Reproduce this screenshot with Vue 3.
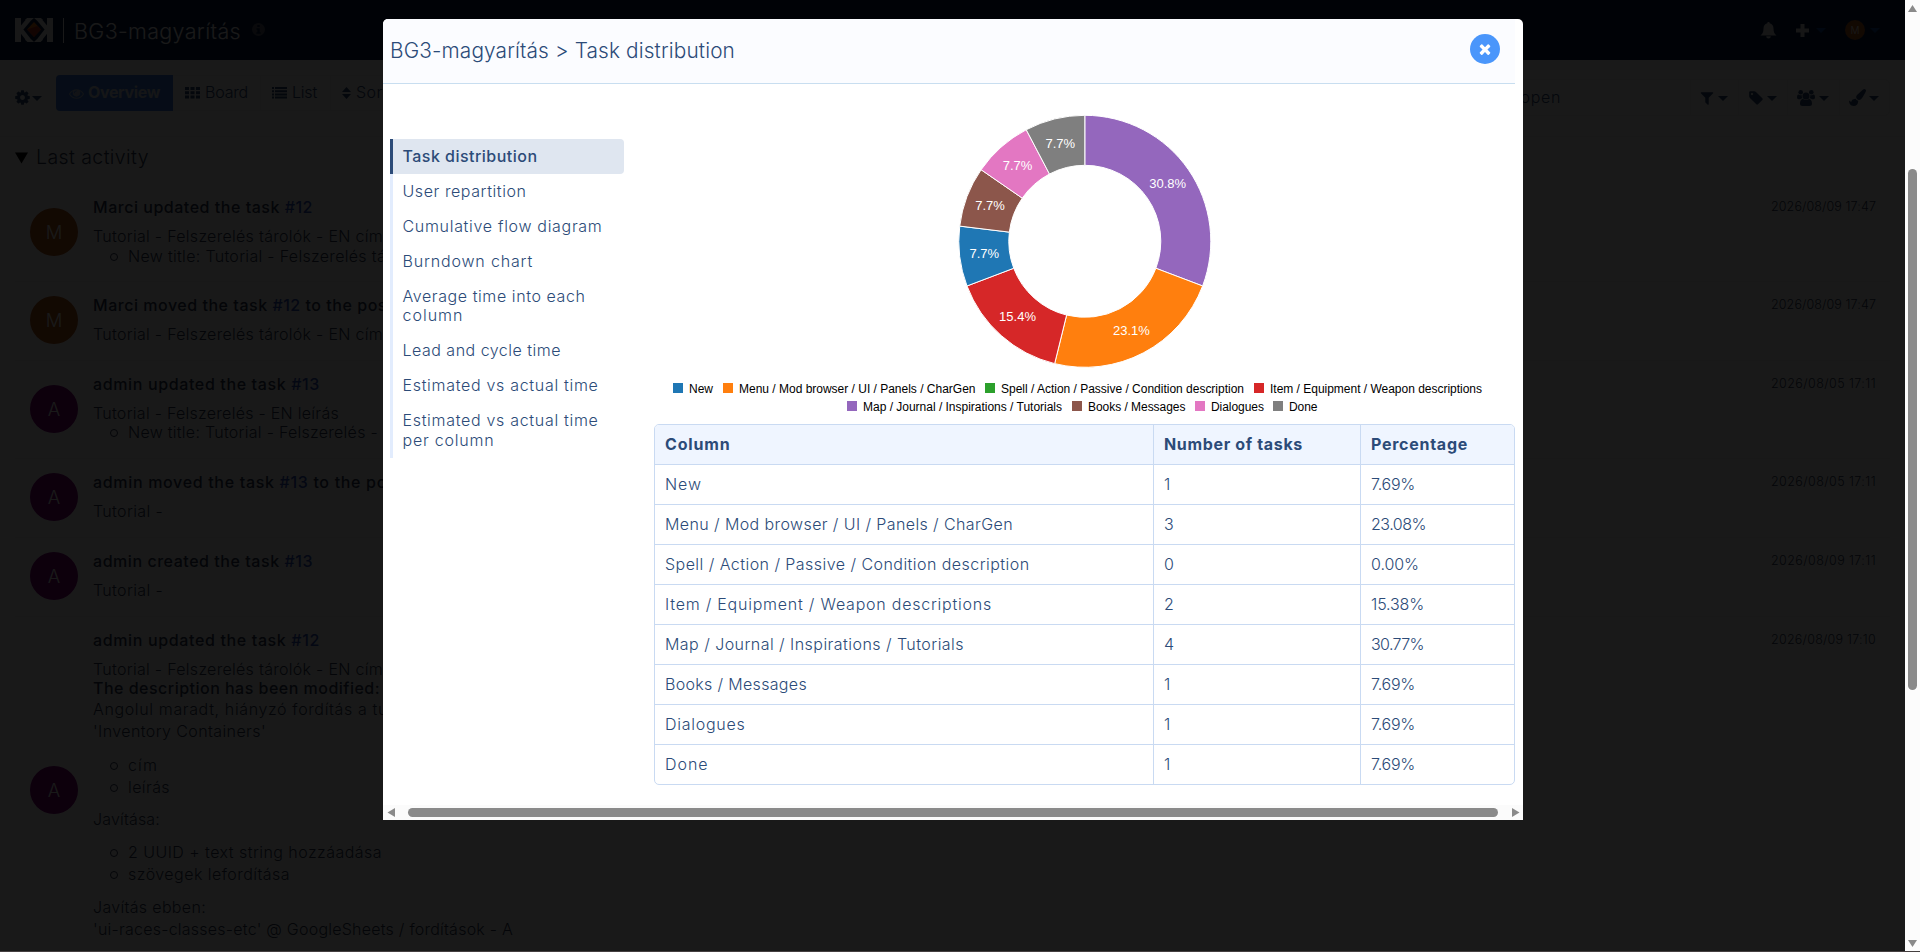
<script setup>
const setSpacing = (el, binding) => {
  el.style.letterSpacing = '0px'
  const natural = el.getBoundingClientRect().width
  const count = el.textContent.trim().length
  el.style.letterSpacing = ((binding.value - natural) / count).toFixed(3) + 'px'
}
// Tracks the text out so that it fills the given width
const vFit = { mounted: setSpacing }

const icons = {
  gear: 'M1152 896q0-106-75-181t-181-75-181 75-75 181 75 181 181 75 181-75 75-181zm512-109v222q0 12-8 23t-20 13l-185 28q-19 54-39 91 35 50 107 138 10 12 10 25t-9 23q-27 37-99 108t-94 71q-12 0-26-9l-138-108q-44 23-91 38-16 136-29 186-7 28-36 28h-222q-14 0-24.5-8.5t-11.5-21.5l-28-184q-49-16-90-37l-141 107q-10 9-25 9-14 0-25-11-126-114-165-168-7-10-7-23 0-12 8-23 15-21 51-66.5t54-70.5q-27-50-41-99l-183-27q-13-2-21-12.5t-8-23.5v-222q0-12 8-23t19-13l186-28q14-46 39-92-40-57-107-138-10-12-10-24 0-10 9-23 26-36 98.5-107.5t94.5-71.5q13 0 26 10l138 107q44-23 91-38 16-136 29-186 7-28 36-28h222q14 0 24.5 8.5t11.5 21.5l28 184q49 16 90 37l142-107q9-9 24-9 13 0 25 10 129 119 165 170 7 8 7 22 0 12-8 23-15 21-51 66.5t-54 70.5q26 50 41 98l183 28q13 2 21 12.5t8 23.5z',
  eye: 'M1664 960q-152-236-381-353 61 104 61 225 0 185-131.5 316.5t-316.5 131.5-316.5-131.5-131.5-316.5q0-121 61-225-229 117-381 353 133 205 333.5 326.5t434.5 121.5 434.5-121.5 333.5-326.5zm-720-384q0-20-14-34t-34-14q-125 0-214.5 89.5t-89.5 214.5q0 20 14 34t34 14 34-14 14-34q0-86 61-147t147-61q20 0 34-14t14-34zm848 384q0 34-20 69-140 230-376.5 368.5t-499.5 138.5-499.5-139-376.5-368q-20-35-20-69t20-69q140-229 376.5-368t499.5-139 499.5 139 376.5 368q20 35 20 69z',
  filter: 'M1595 295q17 41-14 70l-493 493v742q0 42-39 59-13 5-25 5-27 0-45-19l-256-256q-19-19-19-45v-486l-493-493q-31-29-14-70 17-39 59-39h1280q42 0 59 39z',
  tag: 'M576 448q0-53-37.5-90.5t-90.5-37.5-90.5 37.5-37.5 90.5 37.5 90.5 90.5 37.5 90.5-37.5 37.5-90.5zm1067 576q0 53-37 90l-491 492q-39 37-91 37-53 0-90-37l-715-716q-38-37-64.5-101t-26.5-117v-416q0-52 38-90t90-38h416q53 0 117 26.5t102 64.5l715 714q37 39 37 91z',
  brush: 'M1615 0q70 0 122.5 46.5t52.5 116.5q0 63-45 151-332 629-465 752-97 91-218 91-126 0-216.5-92.5t-90.5-219.5q0-128 92-212l638-579q59-54 130-54zm-909 1034q39 76 106.5 130t150.5 76l1 71q4 213-129.5 347t-348.5 134q-123 0-218-46.5t-152.5-127.5-86.5-183-29-220q7 5 41 30t62 44.5 59 36.5 46 17q41 0 55-37 25-66 57.5-112.5t69.5-76 88-47.5 103-25.5 125-10.5z',
  times: 'M1490 1322q0 40-28 68l-136 136q-28 28-68 28t-68-28l-294-294-294 294q-28 28-68 28t-68-28l-136-136q-28-28-28-68t28-68l294-294-294-294q-28-28-28-68t28-68l136-136q28-28 68-28t68 28l294 294 294-294q28-28 68-28t68 28l136 136q28 28 28 68t-28 68l-294 294 294 294q28 28 28 68z',
}

const events = [
  { who: 'M', text: 'Marci updated the task', id: '#12', w: 220, desc: 'Tutorial - Felszerelés tárolók - EN cím', dw: 290, li: 'New title: Tutorial - Felszerelés tá', lw: 258, date: '2026/08/09 17:47' },
  { who: 'M', text: 'Marci moved the task', id: '#12', rest: ' to the pos', w: 294, desc: 'Tutorial - Felszerelés tárolók - EN cím', dw: 290, date: '2026/08/09 17:47' },
  { who: 'A', text: 'admin updated the task', id: '#13', w: 227, desc: 'Tutorial - Felszerelés - EN leírás', dw: 246, li: 'New title: Tutorial - Felszerelés -', lw: 250, date: '2026/08/05 17:11' },
  { who: 'A', text: 'admin moved the task', id: '#13', rest: ' to the po', w: 294, desc: 'Tutorial -', dw: 70, date: '2026/08/05 17:11' },
  { who: 'A', text: 'admin created the task', id: '#13', w: 220, desc: 'Tutorial -', dw: 70, date: '2026/08/09 17:11' },
  { who: 'A', text: 'admin updated the task', id: '#12', w: 227, desc: 'Tutorial - Felszerelés tárolók - EN cím', dw: 290, long: true, date: '2026/08/09 17:10' },
]

const menu = [
  [['Task distribution', 135]],
  [['User repartition', 124]],
  [['Cumulative flow diagram', 200]],
  [['Burndown chart', 130.5]],
  [['Average time into each', 183], ['column', 61]],
  [['Lead and cycle time', 158.5]],
  [['Estimated vs actual time', 196]],
  [['Estimated vs actual time', 196], ['per column', 92]],
]

const rows = [
  ['New', 37, '1', 7, '7.69%', 44],
  ['Menu / Mod browser / UI / Panels / CharGen', 348, '3', 10, '23.08%', 55],
  ['Spell / Action / Passive / Condition description', 364.5, '0', 11, '0.00%', 48],
  ['Item / Equipment / Weapon descriptions', 327, '2', 10, '15.38%', 53],
  ['Map / Journal / Inspirations / Tutorials', 299, '4', 11, '30.77%', 53],
  ['Books / Messages', 142, '1', 7, '7.69%', 44],
  ['Dialogues', 80.5, '1', 7, '7.69%', 44],
  ['Done', 43.5, '1', 7, '7.69%', 44],
]

const cx = 430.8, cy = 141.3, R = 126, r = 76
const parts = [[4, '30.8%', '#9467bd'], [3, '23.1%', '#ff7f0e'], [2, '15.4%', '#d62728'], [1, '7.7%', '#1f77b4'], [1, '7.7%', '#8c564b'], [1, '7.7%', '#e377c2'], [1, '7.7%', '#7f7f7f']]
let sum = 0
const pt = (a, q) => `${(cx + Math.sin(a) * q).toFixed(2)} ${(cy - Math.cos(a) * q).toFixed(2)}`
const slices = parts.map(([n, label, fill]) => {
  const a = (sum / 13) * 2 * Math.PI
  sum += n
  const b = (sum / 13) * 2 * Math.PI
  const m = (a + b) / 2
  return {
    label, fill,
    d: `M${pt(a, R)}A${R} ${R} 0 0 1 ${pt(b, R)}L${pt(b, r)}A${r} ${r} 0 0 0 ${pt(a, r)}Z`,
    x: cx + Math.sin(m) * 101 - 0.3, y: cy - Math.cos(m) * 101 + 4.5,
  }
})
const legend = [
  ['New', '#1f77b4', 19, 283, 24],
  ['Menu / Mod browser / UI / Panels / CharGen', '#ff7f0e', 69, 283, 236.5],
  ['Spell / Action / Passive / Condition description', '#2ca02c', 331, 283, 243],
  ['Item / Equipment / Weapon descriptions', '#d62728', 600, 283, 212],
  ['Map / Journal / Inspirations / Tutorials', '#9467bd', 193, 301, 199],
  ['Books / Messages', '#8c564b', 418, 301, 97.5],
  ['Dialogues', '#e377c2', 541, 301, 53],
  ['Done', '#7f7f7f', 619, 301, 28.5],
]
</script>

<template>
  <div class="window">
    <div class="page">
      <header class="top">
        <svg class="logo" width="38" height="24" viewBox="0 0 38 24">
          <path d="M0 0H6V24H0zM32 0H38V24H32z" fill="#eee" />
          <path d="M16 -1L5.500 11.500L16 25M22 -1L32.500 11.500L22 25M11.500 3.500L19 -3L26.500 3.500M11.500 20L19 27L26.500 20" fill="none" stroke="#eee" stroke-width="4.500" />
          <path d="M19 4L26 11.500L19 19L12 11.500Z" fill="#e8720f" />
          <path d="M12 11.500L19 19L26 11.500L22.500 8Z" fill="#a8101a" opacity=".7" />
        </svg>
        <i class="bar"></i>
        <span class="ptitle"><span v-fit="167">BG3-magyarítás</span></span>
        <svg class="info" width="13" height="13" viewBox="0 0 13 13"><circle cx="6.500" cy="6.500" r="6.500" fill="#5a6270" /><path d="M5.300 2h2.400v2H5.300zM4.500 5.200h3.200V9.200h1V10.800H4.400V9.200h1V6.700h-.9z" fill="#001b44" /></svg>
        <div class="user">
          <svg width="17" height="17" viewBox="0 0 17 17"><path d="M8.500 0c.8 0 1.200.5 1.200 1.300C12.400 2 13.500 4 13.500 6.500c0 4 1.200 5.500 3 7H.5c1.800-1.500 3-3 3-7C3.500 4 4.600 2 7.300 1.300 7.300.5 7.700 0 8.500 0zM6.200 14.300h4.600a2.300 2.300 0 0 1-4.600 0z" fill="#ddd" /></svg>
          <svg class="plus" width="13" height="13" viewBox="0 0 13 13"><path d="M4.500 0h4v4.500H13v4H8.500V13h-4V8.500H0v-4h4.500z" fill="#ddd" /></svg>
          <i class="caret blue c1"></i>
          <span class="mini">M</span>
          <i class="caret blue c2"></i>
        </div>
      </header>

      <div class="toolbar">
        <svg class="gear" width="17" height="17" viewBox="0 0 1792 1792"><path :d="icons.gear" /></svg>
        <i class="caret gc"></i>
        <nav class="views">
          <a class="view on"><svg width="15" height="15" viewBox="0 0 1792 1792"><path :d="icons.eye" /></svg><b v-fit="72">Overview</b></a>
          <a class="view board"><svg width="15" height="12" viewBox="0 0 15 12"><path d="M0 0h4v3H0zM5.500 0h4v3h-4zM11 0h4v3h-4zM0 4.300h4v3H0zM5.500 4.300h4v3h-4zM11 4.300h4v3h-4zM0 8.600h4v3H0zM5.500 8.600h4v3h-4zM11 8.600h4v3h-4z" /></svg><span v-fit="43">Board</span></a>
          <a class="view list"><svg width="15" height="12" viewBox="0 0 15 12"><path d="M0 0h2v2H0zM3 0h12v2H3zM0 3.200h2v2H0zM3 3.200h12v2H3zM0 6.400h2v2H0zM3 6.400h12v2H3zM0 9.600h2v2H0zM3 9.600h12v2H3z" /></svg><span v-fit="25">List</span></a>
          <a class="view sort"><svg width="9" height="12" viewBox="0 0 9 12"><path d="M0 5L4.500 0L9 5zM0 7L4.500 12L9 7z" /></svg><span v-fit="32">Sort</span></a>
        </nav>
        <div class="search">
          <div class="query"><span v-fit="94">status:open</span></div>
          <div class="tool t1"><svg width="16" height="16" viewBox="0 0 1792 1792"><path :d="icons.filter" /></svg><i class="caret"></i></div>
          <div class="tool t2"><svg width="16" height="16" viewBox="0 0 1792 1792"><path :d="icons.tag" /></svg><i class="caret"></i></div>
          <div class="tool t3"><svg width="18" height="16" viewBox="0 0 18 16"><circle cx="9" cy="6" r="3.500" /><circle cx="3.700" cy="2.300" r="2.300" /><circle cx="14.300" cy="2.300" r="2.300" /><path d="M3 13.500C3 10.500 4.500 9 6 9q3 2 6 0c1.500 0 3 1.500 3 4.500q0 2.500-2.500 2.500h-7Q3 16 3 13.500zM0 7.500Q0 4.500 1.500 4.500 3 5.500 4.700 4.900 4.500 7 5.500 8.200 4 8.300 3 9.300H1.500Q0 9.300 0 7.500zM18 7.500q0-3-1.500-3-1.500 1-3.200.4.200 2.100-.8 3.300 1.500.1 2.500 1.100h1.500q1.500 0 1.500-1.800z" /></svg><i class="caret"></i></div>
          <div class="tool t4"><svg width="17" height="17" viewBox="0 0 1792 1792"><path :d="icons.brush" /></svg><i class="caret"></i></div>
        </div>
      </div>

      <main class="activity">
        <h2><svg width="13" height="12" viewBox="0 0 13 12"><path d="M0 .5H13L6.500 11.500z" /></svg><span v-fit="113">Last activity</span></h2>
        <section v-for="(e, i) in events" :key="i" class="event">
          <span class="avatar" :class="e.who">{{ e.who }}</span>
          <div class="body">
            <div class="title"><span v-fit="e.w">{{ e.text }} <a>{{ e.id }}</a>{{ e.rest }}</span></div>
            <div class="line"><span v-fit="e.dw">{{ e.desc }}</span></div>
            <div v-if="e.li" class="line item"><span v-fit="e.lw">{{ e.li }}</span></div>
            <template v-if="e.long">
              <div class="line strong"><span v-fit="287">The description has been modified:</span></div>
              <div class="md">
                <p class="first"><span v-fit="295">Angolul maradt, hiányzó fordítás a tu</span><br><span v-fit="173">'Inventory Containers'</span></p>
                <div class="item"><span v-fit="30">cím</span></div>
                <div class="item last"><span v-fit="42">leírás</span></div>
                <p><span v-fit="67">Javítása:</span></p>
                <div class="item"><span v-fit="254">2 UUID + text string hozzáadása</span></div>
                <div class="item last"><span v-fit="162">szövegek lefordítása</span></div>
                <p><span v-fit="113">Javítás ebben:</span><br><span v-fit="420">'ui-races-classes-etc' @ GoogleSheets / fordítások - A</span></p>
              </div>
            </template>
          </div>
          <time><span v-fit="105">{{ e.date }}</span></time>
        </section>
      </main>

      <div class="overlay"></div>

      <div class="modal">
        <header class="mhead">
          <h1><span v-fit="345">BG3-magyarítás &gt; Task distribution</span></h1>
          <span class="close"><svg width="16" height="16" viewBox="0 0 1792 1792"><path :d="icons.times" /></svg></span>
        </header>
        <div class="mbody">
          <ul class="side">
            <li v-for="(m, i) in menu" :key="i" :class="{ active: i === 0 }">
              <div v-for="l in m" :key="l[0]"><span v-fit="l[1]">{{ l[0] }}</span></div>
            </li>
          </ul>
          <div class="content">
            <svg class="chart" width="861" height="324" viewBox="0 0 861 324">
              <path v-for="(s, i) in slices" :key="'s' + i" :d="s.d" :fill="s.fill" stroke="#fff" stroke-width="1" />
              <text v-for="(s, i) in slices" :key="'t' + i" :x="s.x" :y="s.y" class="pct">{{ s.label }}</text>
              <g v-for="l in legend" :key="l[0]">
                <rect :x="l[2]" :y="l[3]" width="10" height="10" :fill="l[1]" />
                <text :x="l[2] + 16" :y="l[3] + 10" :textLength="l[4]">{{ l[0] }}</text>
              </g>
            </svg>
            <div class="table">
              <div class="tr th">
                <div><span v-fit="65.5">Column</span></div>
                <div><span v-fit="139">Number of tasks</span></div>
                <div><span v-fit="97">Percentage</span></div>
              </div>
              <div v-for="row in rows" :key="row[0]" class="tr">
                <div><span v-fit="row[1]">{{ row[0] }}</span></div>
                <div><span>{{ row[2] }}</span></div>
                <div><span v-fit="row[5]">{{ row[4] }}</span></div>
              </div>
            </div>
          </div>
        </div>
        <div class="hscroll">
          <svg width="9" height="9" viewBox="0 0 9 9"><path d="M8 0V9L.5 4.500z" /></svg>
          <i></i>
          <svg width="9" height="9" viewBox="0 0 9 9"><path d="M1 0V9L8.500 4.500z" /></svg>
        </div>
      </div>
    </div>
    <div class="vscroll">
      <svg width="9" height="7" viewBox="0 0 9 7"><path d="M0 7L4.500 0L9 7z" /></svg>
      <i></i>
      <svg width="9" height="7" viewBox="0 0 9 7"><path d="M0 0L4.500 7L9 0z" /></svg>
    </div>
  </div>
</template>

<style>
html, body { margin: 0; overflow: hidden; background: #453f40; }
</style>

<style scoped>
* { box-sizing: border-box; }
.window { width: 1920px; height: 951px; display: flex; overflow: hidden; font: 300 16px/19.5px Inter, "Noto Sans", sans-serif; color: #2c4b78; }
.window span, .window b { white-space: nowrap; }
.page { position: relative; width: 1905px; height: 951px; overflow: hidden; background: #fff; }
.page svg { display: block; flex: none; }
i { display: block; flex: none; }
h1, h2, p, ul { margin: 0; padding: 0; font-weight: 300; }

.top { height: 60px; background: #001b44; display: flex; align-items: center; padding-left: 15px; color: #fff; }
.bar { width: 1px; height: 25px; background: #fff; margin: 1px 10px 0 10px; }
.ptitle { font-size: 21.500px; line-height: 26px; width: 178px; padding-top: 1px; }
.info { margin-top: -1px; }
.user { margin-left: auto; display: flex; align-items: center; padding-right: 25px; }
.plus { margin-left: 19px; }
.caret { border: 5px solid transparent; border-top-color: currentColor; border-bottom: 0; width: 0; height: 0; }
.blue { color: #0b4aa0; }
.c1 { margin-left: 7px; }
.c2 { margin-left: 5px; }
.mini { width: 20px; height: 20px; margin-left: 19px; border-radius: 50%; background: #b4591c; font-size: 10px; line-height: 20px; text-align: center; }

.toolbar { height: 77px; display: flex; background: #fafafa; border-bottom: 1px solid #f0f0f0; padding: 15px 15px 0 14px; }
.gear { margin-top: 14px; fill: #2c4b78; }
.gc { margin: 21px 0 0 1px; color: #2c4b78; }
.views { display: flex; height: 36px; margin-left: 14px; border: 1px solid #f0f0f0; border-radius: 5px; }
.view { display: flex; align-items: center; height: 35px; margin-top: -1px; padding-left: 11px; border-right: 1px solid #f0f0f0; fill: #2c4b78; }
.view span { margin-left: 5px; }
.view.on { width: 117px; height: 36px; margin-left: -1px; padding-left: 13px; background: #3c7fe8; border: 0; border-radius: 4px 0 0 4px; color: #d5dbe6; fill: #b5c4dd; }
.view b { margin-left: 4px; font-weight: 700; }
.board { width: 88px; padding-left: 12px; }
.list { width: 70px; }
.sort { width: 110px; }
.search { margin: 4px 0 0 auto; height: 37px; display: flex; border: 1px solid #efefef; border-radius: 5px; }
.query { width: 266px; background: #fff; padding: 8px 129px 0 0; text-align: right; }
.tool { display: flex; align-items: center; gap: 3px; padding-left: 8px; border-left: 1px solid #efefef; fill: #2c4b78; }
.tool .caret { margin-top: 2px; }
.t1 { width: 48px; }
.t2 { width: 49px; padding-left: 9px; }
.t3 { width: 52px; gap: 4px; padding-left: 9px; }
.t4 { width: 50px; padding-left: 9px; }

.activity { padding: 0 15px; color: #2c3b58; }
.activity h2 { height: 47px; padding-bottom: 5px; display: flex; align-items: center; gap: 8px; font-size: 19.500px; }
.event { display: flex; align-items: center; padding: 14.250px 0 15.500px 15px; border-bottom: 1px solid #eee; }
.avatar { width: 48px; height: 48px; border-radius: 50%; font-size: 18.500px; line-height: 49px; text-align: center; color: #fff; flex: none; }
.avatar.M { background: #b4591c; }
.avatar.A { background: #80007c; }
.body { margin-left: 15px; flex: 1; min-width: 0; }
.title { margin-bottom: 9.250px; font-weight: 500; height: 19.500px; }
.title a { color: #3050c0; }
.line { height: 19.500px; }
.line.item { height: 18.800px; }
.strong { font-weight: 500; }
.item { position: relative; padding-left: 35px; }
.item::before { content: ""; position: absolute; left: 17px; top: 6px; width: 6px; height: 6px; border: 1px solid #2c3b58; border-radius: 50%; }
.md { line-height: 22px; padding-bottom: 10px; margin-top: -1px; }
.md p { margin-bottom: 10.700px; }
.md p.first { margin-bottom: 12px; }
.md p:last-child { margin-bottom: 0; }
.md .last { margin-bottom: 10.700px; }
.md .item::before { top: 8px; }
time { align-self: flex-start; font-size: 12.500px; margin: -1px 14px 0 0; }

.overlay { position: absolute; inset: 0; background: rgba(0, 0, 0, .9); }
.modal { position: absolute; left: 383px; top: 19px; width: 1140px; height: 801px; background: #fff; border-radius: 5px 5px 0 0; overflow: hidden; display: flex; flex-direction: column; }
.mhead { height: 65px; width: 1132px; background: #fbfcff; border-bottom: 1px solid #c8def0; display: flex; justify-content: space-between; padding: 0 15px 0 7px; }
.mhead h1 { font-size: 20.800px; line-height: 26px; padding-top: 19px; }
.close { width: 30px; height: 30px; margin-top: 15px; border-radius: 50%; background: #4a96fb; fill: #fff; display: flex; align-items: center; justify-content: center; }
.mbody { flex: 1; display: flex; padding-left: 7px; min-height: 0; }
.side { list-style: none; width: 234px; margin-top: 55px; }
.side li { border-left: 3px solid #e2ecfd; padding: 7.750px 0 7.750px 9.500px; }
.side li.active { border-left-color: #2c4b78; background: #dfe6f0; border-radius: 0 4px 4px 0; font-weight: 500; }
.content { margin-left: 30px; margin-top: 16px; width: 861px; }
.chart text { font: 12px "Liberation Sans", Arial, sans-serif; fill: #000; }
.chart .pct { font-size: 13px; fill: #fff; text-anchor: middle; }
.table { border: 1px solid #c9daf2; border-radius: 5px; overflow: hidden; }
.tr { display: grid; grid-template-columns: 499px 207px 1fr; height: 40px; line-height: 39px; border-bottom: 1px solid #c9daf2; }
.tr:last-child { height: 39px; border-bottom: 0; }
.tr > div { padding-left: 10px; border-right: 1px solid #c9daf2; }
.tr > div:last-child { border-right: 0; }
.tr.th { font-weight: 700; background: #eff5ff; }
.hscroll { height: 15px; background: #fbfbfb; display: flex; align-items: center; padding: 0 4px; fill: #8a8a8a; }
.hscroll i { width: 1090px; height: 9px; margin: 0 13px 0 12px; border-radius: 5px; background: #8a8a8a; }
.vscroll { width: 15px; height: 951px; background: #fcfcfc; display: flex; flex-direction: column; align-items: center; padding: 5px 0 4px; fill: #8a8a8a; }
.vscroll svg { flex: none; }
.vscroll i { width: 9px; height: 521px; margin: 157px 0 auto; border-radius: 5px; background: #8a8a8a; }
</style>
